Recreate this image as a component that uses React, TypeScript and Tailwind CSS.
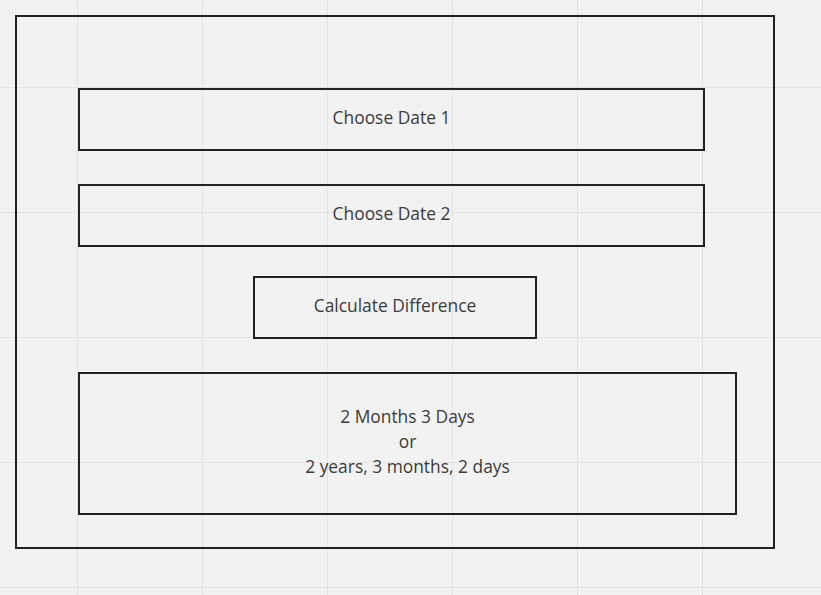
export default function App() {
  const box = "border-2 border-[#222222] flex items-center justify-center text-[17.4px] text-[#3b3b3b] pb-[5px]";
  return (
    <div
      className="w-full h-[595px] bg-[#f2f2f2] overflow-hidden pt-[15px] pl-[15px] bg-[image:linear-gradient(to_right,#e4e4e4_1px,transparent_1px),linear-gradient(to_bottom,#e4e4e4_1px,transparent_1px)] bg-[size:125px_125px] bg-[position:77px_87px]"
      style={{ fontFamily: '"Open Sans", "Noto Sans", sans-serif' }}
    >
      <div className="w-[760px] h-[534px] border-2 border-[#222222] pl-[61px] pt-[71px] flex flex-col items-start">
        <div className={`${box} w-[627px] h-[63px]`}>Choose Date 1</div>
        <div className={`${box} w-[627px] h-[63px] mt-[33px]`}>Choose Date 2</div>
        <div className={`${box} w-[284px] h-[63px] mt-[29px] ml-[175px]`}>Calculate Difference</div>
        <div className={`${box} w-[659px] h-[143px] mt-[33px] flex-col leading-[25px]`}>
          <div>2 Months 3 Days</div>
          <div>or</div>
          <div>2 years, 3 months, 2 days</div>
        </div>
      </div>
    </div>
  );
}
